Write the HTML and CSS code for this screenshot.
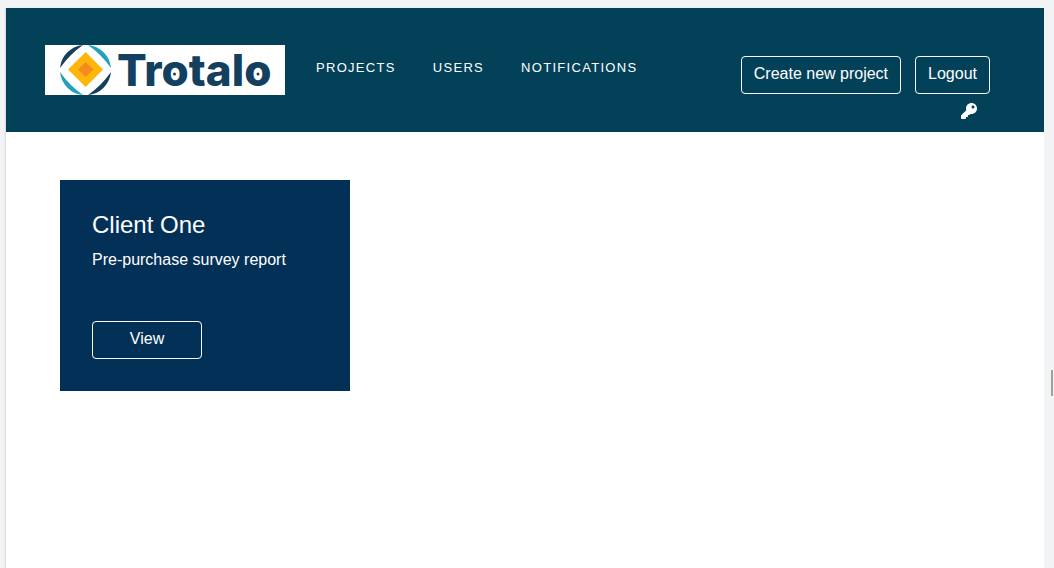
FILE: index.html
```html
<!DOCTYPE html>
<html lang="en">
<head>
<meta charset="utf-8">
<meta name="viewport" content="width=device-width, initial-scale=1">
<title>Trotalo</title>
<link rel="stylesheet" href="styles.css">
</head>
<body>
<div class="page">
  <header class="header">
    <a class="logo" href="#" aria-label="Trotalo">
      <svg width="240" height="50" viewBox="0 0 240 50">
        <path fill="#14405f" d="M15 23A25.500 25.500 0 0 1 38 0Q25 9 15 23Z"/>
        <path fill="#23a0be" d="M43 0A25.500 25.500 0 0 1 66 23Q56 9 43 0Z"/>
        <path fill="#14405f" d="M66 27A25.500 25.500 0 0 1 43 50Q56 41 66 27Z"/>
        <path fill="#23a0be" d="M38 50A25.500 25.500 0 0 1 15 27Q25 41 38 50Z"/>
        <path fill="#ffb60a" d="M40.700 7L58 24.500L40.700 42L23 24.500Z"/>
        <path fill="#f58a1f" d="M40.700 17L48.500 24.500L40.700 32L33 24.500Z"/>
        <text class="wordmark" x="72" y="41">Trotalo</text>
        <circle cx="129.500" cy="29" r="1.500" fill="#14405f"/>
        <circle cx="213" cy="29" r="1.500" fill="#14405f"/>
      </svg>
    </a>
    <nav class="nav">
      <a href="#">PROJECTS</a>
      <a href="#">USERS</a>
      <a href="#">NOTIFICATIONS</a>
    </nav>
    <div class="actions">
      <button class="btn" type="button">Create new project</button>
      <button class="btn" type="button">Logout</button>
      <button class="key" type="button" aria-label="Change password">
        <svg width="16" height="16" viewBox="0 0 512 512"><path fill="#fff" d="M512 176.001C512 273.203 433.202 352 336 352c-11.220 0-22.190-1.062-32.827-3.069l-24.012 27.014A23.999 23.999 0 0 1 261.223 384H224v40c0 13.255-10.745 24-24 24h-40v40c0 13.255-10.745 24-24 24H24c-13.255 0-24-10.745-24-24v-78.059c0-6.365 2.529-12.470 7.029-16.971l161.802-161.802C163.108 213.814 160 195.271 160 176 160 78.798 238.797.001 335.999 0 433.488-.001 512 78.511 512 176.001zM336 128c0 26.510 21.490 48 48 48s48-21.490 48-48-21.490-48-48-48-48 21.490-48 48z"/></svg>
      </button>
    </div>
  </header>
  <main class="main">
    <article class="card">
      <h2>Client One</h2>
      <p>Pre-purchase survey report</p>
      <button class="btn view" type="button">View</button>
    </article>
  </main>
</div>
<div class="thumb"></div>
</body>
</html>
```
FILE: styles.css
```css
* { box-sizing: border-box; }
body {
  margin: 0;
  padding: 8px 10px 0 6px;
  background: #f1f3f5;
  font: 16px/24px "Liberation Sans", Arial, sans-serif;
}
.page {
  min-height: calc(100vh - 8px);
  background: #fff;
  box-shadow: -1px 0 1px #ddd;
}
.header {
  display: flex;
  align-items: flex-start;
  min-height: 124px;
  padding: 37px 54px 0 39px;
  background: #034158;
}
.logo {
  display: block;
  flex: none;
  width: 240px;
  height: 50px;
  background: #fff;
}
.logo svg {
  display: block;
  overflow: visible;
}
.wordmark {
  font: 800 44px Inter, sans-serif;
  fill: #14405f;
}
.nav {
  display: flex;
  gap: 37px;
  padding: 11px 0 0 31px;
}
.nav a {
  color: #fff;
  font-size: 13px;
  letter-spacing: 0.1em;
  text-decoration: none;
}
.actions {
  display: flex;
  flex-wrap: wrap;
  justify-content: flex-end;
  width: 260px;
  margin-left: auto;
  padding-top: 11px;
  column-gap: 14px;
}
.btn {
  height: 38px;
  padding: 0 12px 2px;
  border: 1px solid #fff;
  border-radius: 4px;
  background: transparent;
  color: #fff;
  font: inherit;
}
.key {
  height: 34px;
  padding: 0 13px;
  border: 0;
  background: transparent;
}
.key svg { display: block; }
.main { padding: 48px 54px; }
.card {
  width: 290px;
  padding: 32px;
  background: #033057;
  color: #fff;
}
.card h2 {
  margin: 0 0 10px;
  font-size: 24px;
  font-weight: 400;
  line-height: 26px;
}
.card p {
  margin: 0 0 49px;
}
.view { width: 110px; }
.thumb {
  position: fixed;
  right: 1px;
  top: 370px;
  width: 2px;
  height: 26px;
  background: #a0a0a0;
}
```
